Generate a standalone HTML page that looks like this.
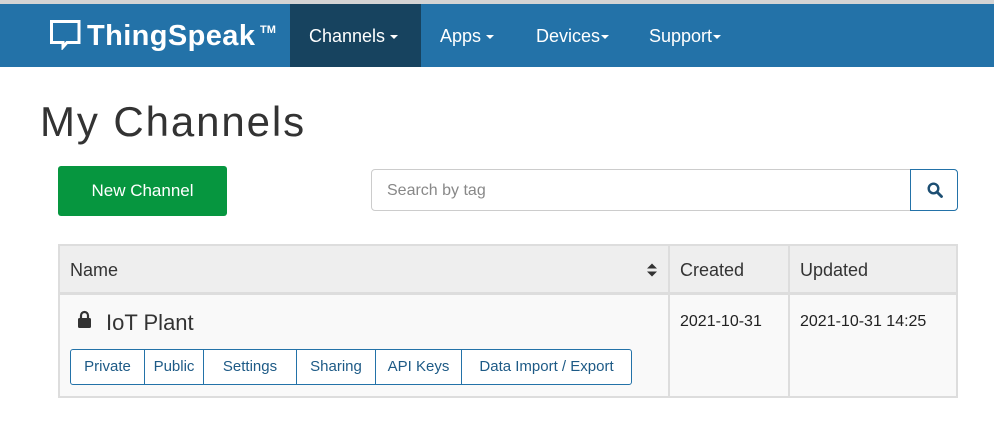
<!DOCTYPE html>
<html><head><meta charset="utf-8"><style>
*{box-sizing:border-box;margin:0;padding:0}
body{width:994px;height:443px;background:#fff;font-family:"Liberation Sans",sans-serif;color:#333;position:relative;overflow:hidden}
.top{position:absolute;left:0;top:0;width:994px;height:4px;background:#d4d4d4}
.nav{position:absolute;left:0;top:4px;width:994px;height:63px;background:#2372a8}
.nav .it{position:absolute;top:0;height:63px;line-height:64px;color:#fff;font-size:18px}
.nav .act{background:#17435f}
.logo{position:absolute;left:87px;top:16px;color:#fff;font-weight:bold;font-size:29px;letter-spacing:0.4px;white-space:nowrap}
.tm{position:absolute;left:260px;top:20px;color:#fff;font-weight:bold;font-size:11px}
.car{display:inline-block;width:0;height:0;border-left:4px solid transparent;border-right:4px solid transparent;border-top:4px solid #fff;vertical-align:middle;margin-left:5px}
h1{position:absolute;left:40px;top:98px;font-size:42px;font-weight:normal;color:#333;letter-spacing:1.9px}
.btn{position:absolute;left:58px;top:166px;width:169px;height:50px;background:#06963f;border-radius:3px;color:#fff;font-size:17px;text-align:center;line-height:50px}
.search{position:absolute;left:371px;top:169px;width:540px;height:42px;border:1px solid #ccc;border-radius:4px 0 0 4px;font-size:16px;color:#888;padding-left:15px;line-height:42px}
.sbtn{position:absolute;left:910px;top:169px;width:48px;height:42px;border:1px solid #2372a8;border-radius:0 4px 4px 0;background:#fff}
.tbl{position:absolute;left:58px;top:244px;width:900px;height:154px;border:2px solid #ddd;background:#f9f9f9}
.hdr{position:absolute;left:0;top:0;width:896px;height:49px;background:#eee;border-bottom:3px solid #ddd}
.vl{position:absolute;top:0;width:2px;height:150px;background:#ddd}
.th{position:absolute;top:14px;font-size:18px;color:#333}
.td{position:absolute;top:67px;font-size:16px;color:#222}
.seg{position:absolute;left:10px;top:103px;height:36px;display:flex;border:1px solid #2372a8;border-radius:3px;background:#fff}
.seg div{height:34px;line-height:34px;font-size:15px;color:#1d5a86;text-align:center;border-right:1px solid #2372a8;white-space:nowrap;overflow:hidden}
.seg div:last-child{border-right:none}
</style></head><body>
<div class="top"></div>
<div class="nav">
<svg style="position:absolute;left:50px;top:16px" width="31" height="30" viewBox="0 0 31 30"><path d="M1.5 1.5H29V22.5H17L13 27V22.5H1.5Z" fill="none" stroke="#fff" stroke-width="3"/></svg>
<div class="logo">ThingSpeak</div>
<div class="tm">TM</div>
<div class="it act" style="left:290px;width:131px;padding-left:19px">Channels<span class="car"></span></div>
<div class="it" style="left:440px">Apps<span class="car"></span></div>
<div class="it" style="left:536px">Devices<span class="car" style="margin-left:1px"></span></div>
<div class="it" style="left:649px">Support<span class="car" style="margin-left:1px"></span></div>
</div>
<h1>My Channels</h1>
<div class="btn">New Channel</div>
<div class="search">Search by tag</div>
<div class="sbtn"><svg style="position:absolute;left:16px;top:12px" width="16" height="16" viewBox="0 0 16 16"><circle cx="6.5" cy="6.5" r="4.8" fill="none" stroke="#1d4f73" stroke-width="2.4"/><path d="M10 10L14.5 14.5" stroke="#1d4f73" stroke-width="2.8" stroke-linecap="round"/></svg></div>
<div class="tbl">
<div class="hdr"></div>
<div class="vl" style="left:608px"></div>
<div class="vl" style="left:728px"></div>
<div class="th" style="left:10px">Name</div>
<svg style="position:absolute;left:586px;top:16px" width="12" height="16" viewBox="0 0 12 16"><path d="M1 6.5L6 1.5L11 6.5Z M1 9.5L6 14.5L11 9.5Z" fill="#333"/></svg>
<div class="th" style="left:620px">Created</div>
<div class="th" style="left:740px">Updated</div>
<svg style="position:absolute;left:17px;top:64px" width="15" height="19" viewBox="0 0 15 19"><path d="M4 8V5.5a3.5 3.5 0 0 1 7 0V8" fill="none" stroke="#333" stroke-width="2.2"/><rect x="1" y="8" width="13" height="10" rx="1.5" fill="#333"/></svg>
<div class="td" style="left:46px;top:64px;font-size:22px;color:#333">IoT Plant</div>
<div class="td" style="left:620px">2021-10-31</div>
<div class="td" style="left:740px">2021-10-31 14:25</div>
<div class="seg">
<div style="width:74px">Private</div><div style="width:59px">Public</div><div style="width:93px">Settings</div><div style="width:79px">Sharing</div><div style="width:86px">API Keys</div><div style="width:169px">Data Import / Export</div>
</div>
</div>
</body></html>
